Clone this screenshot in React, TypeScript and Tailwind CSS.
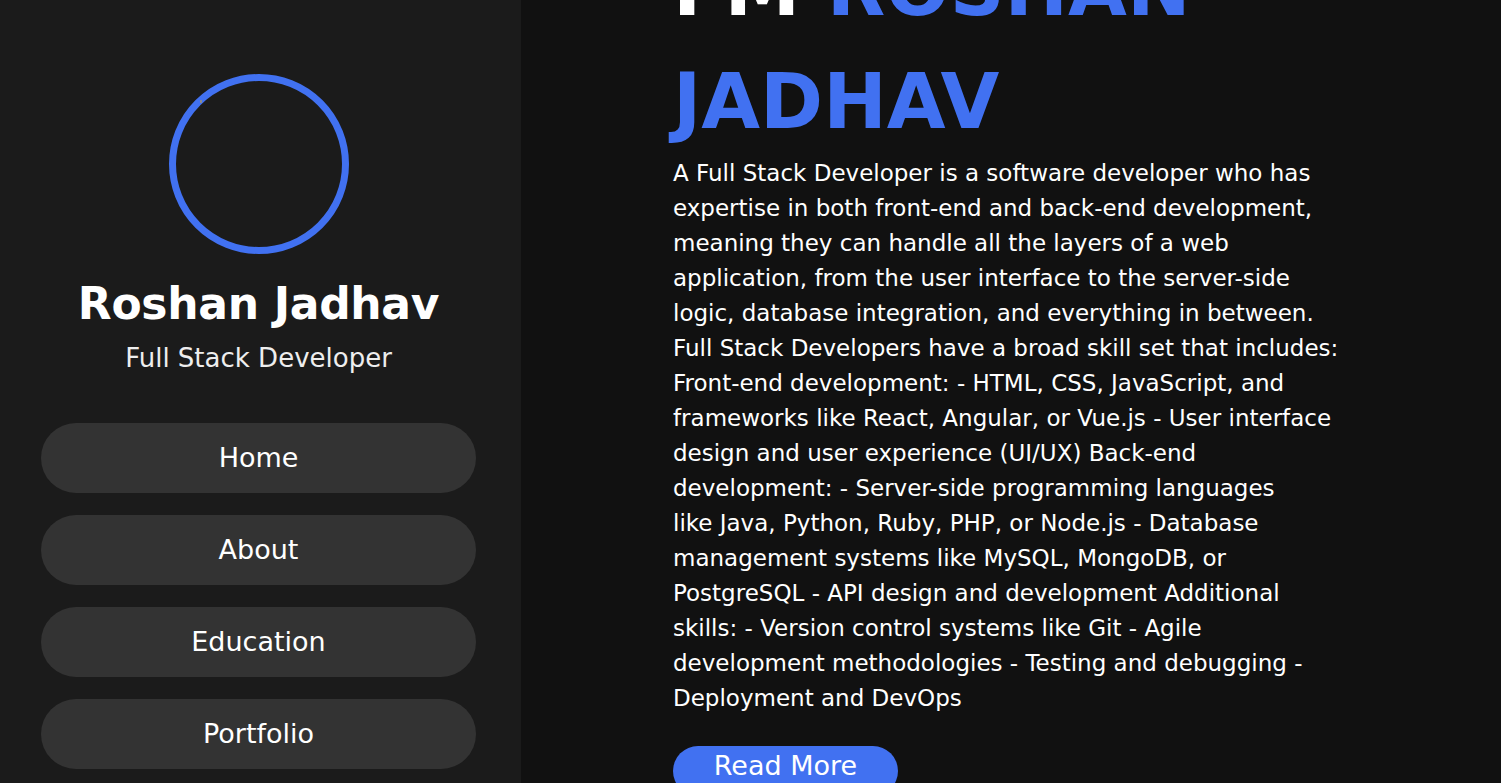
import React from "react";

const para = [
  "A Full Stack Developer is a software developer who has",
  "expertise in both front-end and back-end development,",
  "meaning they can handle all the layers of a web",
  "application, from the user interface to the server-side",
  "logic, database integration, and everything in between.",
  "Full Stack Developers have a broad skill set that includes:",
  "Front-end development: - HTML, CSS, JavaScript, and",
  "frameworks like React, Angular, or Vue.js - User interface",
  "design and user experience (UI/UX) Back-end",
  "development: - Server-side programming languages",
  "like Java, Python, Ruby, PHP, or Node.js - Database",
  "management systems like MySQL, MongoDB, or",
  "PostgreSQL - API design and development Additional",
  "skills: - Version control systems like Git - Agile",
  "development methodologies - Testing and debugging -",
  "Deployment and DevOps",
];

export default function App() {
  return (
    <div
      className="flex h-[783px] w-[1501px] overflow-hidden bg-[#111111] text-white"
      style={{ fontFamily: '"DejaVu Sans", sans-serif' }}
    >
      <aside className="flex h-full w-[521px] shrink-0 flex-col items-center bg-[#1b1b1b] pr-[4px]">
        <div className="relative mt-[74px] h-[180px] w-[180px] shrink-0 rounded-full border-[7px] border-[#4171f1]">
          <span className="absolute left-[24px] top-[19px] h-[3px] w-[2px] bg-[#8a8a8a]" />
        </div>
        <h1 className="mt-[22px] whitespace-nowrap text-[44px] font-bold leading-[56px] tracking-[-0.3px]">
          Roshan Jadhav
        </h1>
        <p className="mt-[8px] whitespace-nowrap text-[26px] leading-[36px] text-[#eeeeee]">
          Full Stack Developer
        </p>
        <nav className="mt-[47px] flex flex-col gap-[22px]">
          {["Home", "About", "Education", "Portfolio"].map((t) => (
            <a
              key={t}
              className="flex h-[70px] w-[435px] shrink-0 items-center justify-center rounded-full bg-[#333333] text-[27px]"
            >
              {t}
            </a>
          ))}
        </nav>
      </aside>
      <main className="flex flex-col items-start pl-[152px]">
        <h2 className="-mt-[68px] whitespace-nowrap text-[76px] font-bold leading-[113px]">
          <span className="block">
            I'M <span className="text-[#4171f1]">ROSHAN</span>
          </span>
          <span className="block text-[#4171f1]">JADHAV</span>
        </h2>
        <p className="-mt-[2px] text-[23px] leading-[35px] text-white">
          {para.map((l, i) => (
            <span key={i} className="block whitespace-nowrap">
              {l}
            </span>
          ))}
        </p>
        <button className="mt-[30px] flex h-[50px] w-[225px] shrink-0 items-start justify-center rounded-full bg-[#4171f1] text-[27px] font-medium leading-[40px]">
          Read More
        </button>
      </main>
    </div>
  );
}
